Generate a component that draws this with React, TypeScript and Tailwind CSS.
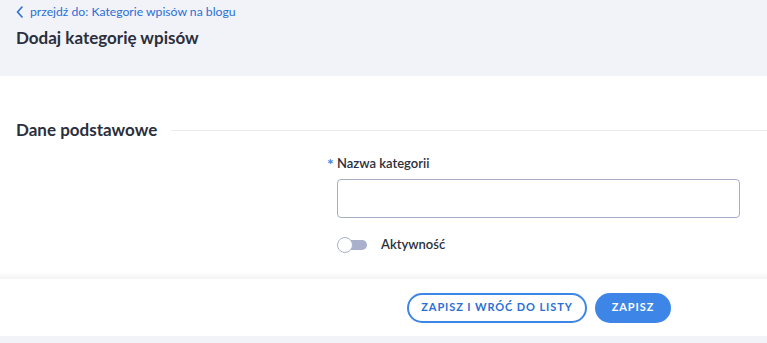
import React from "react";

export default function App() {
  return (
    <div className="w-[767px] h-[343px] bg-[#f2f3f8] flex flex-col overflow-hidden" style={{ fontFamily: "Lato, 'Noto Sans', sans-serif" }}>
      <div className="h-[76px] px-4 pt-[3px]">
        <a className="flex items-center gap-[6px] text-[12.2px] text-[#2a6fd6] h-[18px]">
          <svg width="8" height="12" viewBox="0 0 8 12" fill="none" stroke="#2a6fd6" strokeWidth="1.6" strokeLinecap="round" strokeLinejoin="round">
            <path d="M6 1 L1.5 6 L6 11" />
          </svg>
          <span>przejdź do: Kategorie wpisów na blogu</span>
        </a>
        <h1 className="mt-[5px] text-[17px] font-bold text-[#2b2f3c] leading-[24px]">Dodaj kategorię wpisów</h1>
      </div>
      <div className="bg-white h-[196px] flex flex-col">
        <div className="mt-[43px] flex items-center h-[22px]">
          <h2 className="pl-4 pr-[14px] text-[17px] font-bold text-[#2b2f3c]">Dane podstawowe</h2>
          <div className="flex-1 h-px bg-[#ebebee]" />
        </div>
        <div className="ml-[327px] mt-[14px] w-[413px]">
          <label className="flex items-center gap-[4px] text-[13px] text-[#2b2f3c] font-semibold h-[18px]">
            <span className="text-[#3d86e8] w-[6px] text-[16px] font-bold leading-[18px]">*</span>
            <span>Nazwa kategorii</span>
          </label>
          <input className="ml-[10px] mt-[6px] w-[403px] h-[39px] border border-[#a6aec6] rounded-[4px] bg-white" />
          <div className="ml-[10px] mt-[17px] flex items-center gap-[14px]">
            <div className="relative w-[30px] h-[16px]">
              <div className="absolute left-[6px] top-[3px] w-[24px] h-[10px] rounded-full bg-[#a8b0cc]" />
              <div className="absolute left-0 top-0 w-[16px] h-[16px] rounded-full bg-white border border-[#aab2cc]" />
            </div>
            <span className="text-[13px] font-semibold text-[#2b2f3c]">Aktywność</span>
          </div>
        </div>
      </div>
      <div className="h-[7px] bg-gradient-to-b from-white to-[#f4f4f6]" />
      <div className="bg-white h-[57px] flex items-center justify-end pr-[96px] gap-[8px]">
        <button className="h-[30px] w-[180px] rounded-full border-2 border-[#3d86e8] text-[#2a6fd6] text-[11px] font-bold tracking-[0.9px] bg-white">ZAPISZ I WRÓĆ DO LISTY</button>
        <button className="h-[30px] w-[76px] rounded-full bg-[#3d86e8] text-white text-[11px] font-bold tracking-[0.9px]">ZAPISZ</button>
      </div>
    </div>
  );
}
